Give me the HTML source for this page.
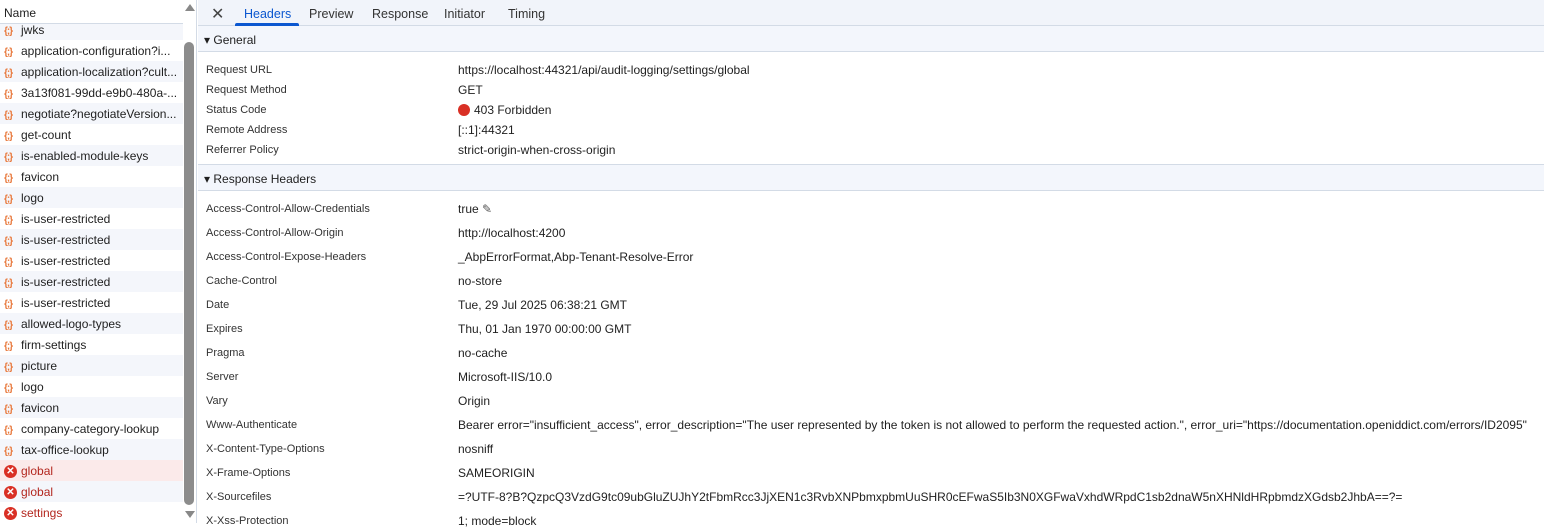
<!DOCTYPE html><html><head><style>
*{margin:0;padding:0;box-sizing:border-box}
body{width:1544px;height:523px;overflow:hidden;background:#fff;font-family:"Liberation Sans",sans-serif;color:#1f1f1f;position:relative}
#left{position:absolute;left:0;top:0;width:197px;height:523px;border-right:1px solid #d3dbe6}
#lh{position:absolute;left:0;top:0;width:183px;height:24px;background:#fff;border-bottom:1px solid #d3dbe6;font-size:12px;padding:6px 4px;z-index:2}
.row{position:absolute;left:0;width:183px;height:21px;font-size:12px;line-height:23px;padding-left:21px;white-space:nowrap;overflow:hidden}
.alt{background:#f4f6fb}
.sel{background:#fbeaea}
.ic{position:absolute;left:4px;top:1px;color:#e8773a;font-size:10px;font-weight:bold;letter-spacing:-1px}
.er{position:absolute;left:4px;top:5px;width:13px;height:13px;border-radius:50%;background:#d93025;color:#fff;font-size:10px;line-height:13px;text-align:center;font-weight:bold}
.red{color:#b3261e}
#sb{position:absolute;left:184px;top:42px;width:10px;height:463px;background:#8c8c8c;border-radius:5px}
#right{position:absolute;left:198px;top:0;right:0;height:523px}
#tabs{height:26px;background:#f1f4fa;border-bottom:1px solid #d3dbe6;font-size:12.5px;position:relative}
#tabs span{position:absolute;top:7px;color:#333}
.sec{height:26px;background:#f3f6fc;border-bottom:1px solid #d3dbe6;font-size:12px;line-height:28px;padding-left:6px}
.k{position:absolute;left:8px;font-size:11px;color:#333}
.v{position:absolute;left:260px;font-size:12px;white-space:nowrap}
</style></head><body>
<div id="left">
<div id="lh">Name</div>
<div style="position:absolute;left:185px;top:4px;width:0;height:0;border-left:5px solid transparent;border-right:5px solid transparent;border-bottom:7px solid #888"></div>
<div style="position:absolute;left:185px;top:511px;width:0;height:0;border-left:5px solid transparent;border-right:5px solid transparent;border-top:7px solid #888"></div>
<div id="sb"></div>
<div class="row alt" style="top:19px"><span class="ic">{;}</span>jwks</div>
<div class="row" style="top:40px"><span class="ic">{;}</span>application-configuration?i...</div>
<div class="row alt" style="top:61px"><span class="ic">{;}</span>application-localization?cult...</div>
<div class="row" style="top:82px"><span class="ic">{;}</span>3a13f081-99dd-e9b0-480a-...</div>
<div class="row alt" style="top:103px"><span class="ic">{;}</span>negotiate?negotiateVersion...</div>
<div class="row" style="top:124px"><span class="ic">{;}</span>get-count</div>
<div class="row alt" style="top:145px"><span class="ic">{;}</span>is-enabled-module-keys</div>
<div class="row" style="top:166px"><span class="ic">{;}</span>favicon</div>
<div class="row alt" style="top:187px"><span class="ic">{;}</span>logo</div>
<div class="row" style="top:208px"><span class="ic">{;}</span>is-user-restricted</div>
<div class="row alt" style="top:229px"><span class="ic">{;}</span>is-user-restricted</div>
<div class="row" style="top:250px"><span class="ic">{;}</span>is-user-restricted</div>
<div class="row alt" style="top:271px"><span class="ic">{;}</span>is-user-restricted</div>
<div class="row" style="top:292px"><span class="ic">{;}</span>is-user-restricted</div>
<div class="row alt" style="top:313px"><span class="ic">{;}</span>allowed-logo-types</div>
<div class="row" style="top:334px"><span class="ic">{;}</span>firm-settings</div>
<div class="row alt" style="top:355px"><span class="ic">{;}</span>picture</div>
<div class="row" style="top:376px"><span class="ic">{;}</span>logo</div>
<div class="row alt" style="top:397px"><span class="ic">{;}</span>favicon</div>
<div class="row" style="top:418px"><span class="ic">{;}</span>company-category-lookup</div>
<div class="row alt" style="top:439px"><span class="ic">{;}</span>tax-office-lookup</div>
<div class="row sel red" style="top:460px"><span class="er">✕</span>global</div>
<div class="row alt red" style="top:481px"><span class="er">✕</span>global</div>
<div class="row red" style="top:502px"><span class="er">✕</span>settings</div>
</div>
<div id="right">
<div id="tabs">
<span style="left:13px;top:4px;font-size:16px;color:#444">✕</span>
<span style="left:46px;color:#0b57d0">Headers</span>
<div style="position:absolute;left:37px;top:23px;width:64px;height:3px;background:#0b57d0;border-radius:2px 2px 0 0"></div>
<span style="left:111px">Preview</span>
<span style="left:174px">Response</span>
<span style="left:246px">Initiator</span>
<span style="left:310px">Timing</span>
</div>
<div class="sec">▾ General</div>
<div style="position:relative;height:113px;border-bottom:1px solid #d3dbe6">
<div class="k" style="top:12px">Request URL</div><div class="v" style="top:11px">https://localhost:44321/api/audit-logging/settings/global</div>
<div class="k" style="top:32px">Request Method</div><div class="v" style="top:31px">GET</div>
<div class="k" style="top:52px">Status Code</div><div class="v" style="top:51px"><span style="display:inline-block;width:12px;height:12px;border-radius:50%;background:#d93025;vertical-align:-2px;margin-right:4px"></span>403 Forbidden</div>
<div class="k" style="top:72px">Remote Address</div><div class="v" style="top:71px">[::1]:44321</div>
<div class="k" style="top:92px">Referrer Policy</div><div class="v" style="top:91px">strict-origin-when-cross-origin</div>
</div>
<div class="sec">▾ Response Headers</div>
<div style="position:relative;height:340px">
<div class="k" style="top:12px">Access-Control-Allow-Credentials</div><div class="v" style="top:11px">true <span style="color:#555">✎</span></div>
<div class="k" style="top:36px">Access-Control-Allow-Origin</div><div class="v" style="top:35px">http://localhost:4200</div>
<div class="k" style="top:60px">Access-Control-Expose-Headers</div><div class="v" style="top:59px">_AbpErrorFormat,Abp-Tenant-Resolve-Error</div>
<div class="k" style="top:84px">Cache-Control</div><div class="v" style="top:83px">no-store</div>
<div class="k" style="top:108px">Date</div><div class="v" style="top:107px">Tue, 29 Jul 2025 06:38:21 GMT</div>
<div class="k" style="top:132px">Expires</div><div class="v" style="top:131px">Thu, 01 Jan 1970 00:00:00 GMT</div>
<div class="k" style="top:156px">Pragma</div><div class="v" style="top:155px">no-cache</div>
<div class="k" style="top:180px">Server</div><div class="v" style="top:179px">Microsoft-IIS/10.0</div>
<div class="k" style="top:204px">Vary</div><div class="v" style="top:203px">Origin</div>
<div class="k" style="top:228px">Www-Authenticate</div><div class="v" style="top:227px">Bearer error="insufficient_access", error_description="The user represented by the token is not allowed to perform the requested action.", error_uri="https://documentation.openiddict.com/errors/ID2095"</div>
<div class="k" style="top:252px">X-Content-Type-Options</div><div class="v" style="top:251px">nosniff</div>
<div class="k" style="top:276px">X-Frame-Options</div><div class="v" style="top:275px">SAMEORIGIN</div>
<div class="k" style="top:300px">X-Sourcefiles</div><div class="v" style="top:299px">=?UTF-8?B?QzpcQ3VzdG9tc09ubGluZUJhY2tFbmRcc3JjXEN1c3RvbXNPbmxpbmUuSHR0cEFwaS5Ib3N0XGFwaVxhdWRpdC1sb2dnaW5nXHNldHRpbmdzXGdsb2JhbA==?=</div>
<div class="k" style="top:324px">X-Xss-Protection</div><div class="v" style="top:323px">1; mode=block</div>
</div>
</div>
</body></html>
